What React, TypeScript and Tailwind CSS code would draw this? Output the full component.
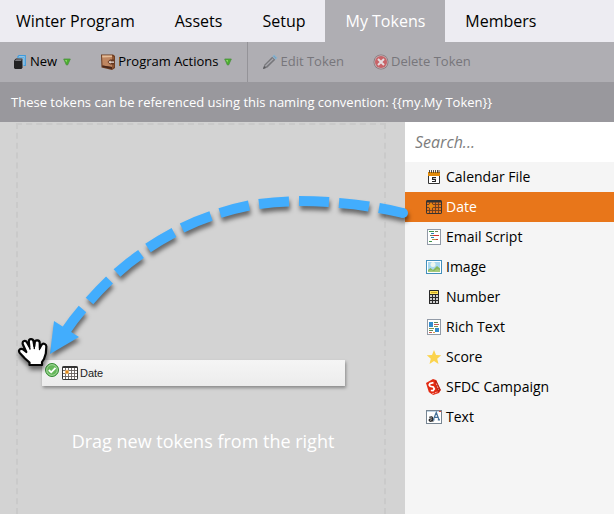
import { useState, type ReactNode } from "react";

function Icon({ children, className = "" }: { children: ReactNode; className?: string }) {
  return (
    <svg viewBox="0 0 16 16" className={`size-4 shrink-0 ${className}`} aria-hidden="true">
      {children}
    </svg>
  );
}

const NewIcon = () => (
  <Icon>
    <path d="M6 4V2.5L7 1.6H13.3V11.5H11.5" fill="#b4cfe3" stroke="#3f9bdc" strokeWidth="1.2" />
    <path d="M6 3.6H12V11" fill="none" stroke="#5aaee6" strokeWidth="1" />
    <path d="M2 6.5L4 4.4H10.5V13.5L9.5 15H3L2 14Z" fill="#222224" />
    <path d="M2.8 7L4.3 5.2H10L9 6.9Z" fill="#77777c" />
  </Icon>
);

const ProgramIcon = () => (
  <Icon>
    <path d="M1 .5H13L15 2V14L12 16L1.5 13.5Z" fill="#6e3d20" />
    <path d="M2 1.5H12V13L2.5 11.5Z" fill="#bf8660" />
    <path d="M2 1.5H12V3L2.5 3.5Z" fill="#e5bd98" />
    <path d="M12 1.5L14 3V13L12 15Z" fill="#8f5633" />
    <path d="M2.5 11.5L12 13V15L2.5 13Z" fill="#49271a" />
    <path d="M7.5 8L10 5.5H14V10.5H10Z" fill="#633620" />
    <path d="M8.5 8L10.5 6.5V7.4H14V8.8H10.5V9.8Z" fill="#f0e4da" />
  </Icon>
);

const EditIcon = () => (
  <Icon>
    <path d="M1 15L2.5 10.4L10.2 2.8L13.3 5.8L5.5 13.4Z" fill="#77777b" />
    <path d="M3.4 12.2L11.2 4.7" stroke="#aaaab0" strokeWidth="1.2" />
    <path d="M1 15L2 12L4 14Z" fill="#58585c" />
    <path d="M10.8 2.3L12.2 1L15 3.9L13.7 5.3Z" fill="#7ba4c1" stroke="#8bb4cf" />
  </Icon>
);

const DeleteIcon = () => (
  <Icon>
    <circle cx="8" cy="8" r="7.5" fill="#88777b" />
    <circle cx="8" cy="8" r="6.7" fill="#c5b4b7" />
    <circle cx="8" cy="8" r="6" fill="#c76368" />
    <path d="M5 5L11 11M11 5L5 11" stroke="#e4dcdf" strokeWidth="2" />
  </Icon>
);

const MenuArrow = () => (
  <svg viewBox="0 0 8 8" className="size-2 shrink-0" aria-hidden="true">
    <path d="M.7 1H7.3L4.6 7H3.4Z" fill="#4cae30" stroke="#4b8f40" strokeWidth=".8" />
    <path d="M2 2H4L3.6 4.5Z" fill="#8fdc6a" />
  </svg>
);

const CalendarFileIcon = () => (
  <Icon>
    <path d="M2.5 6V14.5H13.5V6" fill="#fff" stroke="#333" />
    <path d="M2 3H14V7H2Z" fill="#e08a0a" />
    <path d="M3.5 1V4M5.5 1V4M7.5 1V4M9.5 1V4M11.5 1V4M13 1V4" stroke="#443b2e" strokeWidth=".9" />
    <path d="M10 8.5H6.6V10.4H9.4V12.5H6" fill="none" stroke="#222" strokeWidth="1.1" />
  </Icon>
);

function DateIcon({ active = false }: { active?: boolean }) {
  return (
    <Icon>
      <rect x=".5" y="1.5" width="15" height="13" rx=".6" fill={active ? "#e8761a" : "#fff"} stroke="#333" />
      <path d="M1 2.5H15" stroke="#333" strokeWidth={active ? 2 : 1} />
      <path
        d="M3.5 3V14M6.5 3V14M9.5 3V14M12.5 3V14M1 5.5H15M1 8.5H15M1 11.5H15"
        stroke={active ? "#694022" : "#66615f"}
        strokeWidth=".9"
      />
      {active ? (
        <>
          <circle cx="5" cy="7" r="2.3" fill="#f08b08" />
          <path d="M5 4V10M2 7H8" stroke="#e78b15" strokeWidth=".9" />
        </>
      ) : (
        <>
          <circle cx="5" cy="7" r="2.2" fill="#f3bd72" />
          <circle cx="5" cy="7" r="1.3" fill="#e0861a" />
        </>
      )}
    </Icon>
  );
}

const EmailScriptIcon = () => (
  <Icon>
    <rect x="1.5" y=".5" width="13" height="15" fill="#fff" stroke="#929ba7" />
    <path d="M3 2.5H8M3 12.5H6" stroke="#3c9448" />
    <path d="M9 2.5H12M4 6.5H7" stroke="#707e54" />
    <path d="M5 4.5H8M5 8.5H8" stroke="#2b80b9" />
    <path d="M7 6.5H13M10 10.5H12" stroke="#cf3432" />
    <path d="M6 10.5H10" stroke="#bd9140" />
  </Icon>
);

const ImageIcon = () => (
  <Icon>
    <rect x=".5" y="1.5" width="15" height="13" fill="#fff" stroke="#4390bd" />
    <path d="M2 3H14V13H2Z" fill="#a9d8ee" />
    <circle cx="7" cy="5.5" r="2.5" fill="#edf6ee" />
    <path d="M2 11L4.5 9L7 11L11 7L14 9.5V13H2Z" fill="#88b85a" />
    <path d="M2 12L5 11L8 12L11 10L14 11V13H2Z" fill="#a5c97a" />
  </Icon>
);

const NumberIcon = () => (
  <Icon>
    <rect x="3" y="1" width="10" height="14" rx=".5" fill="#292929" />
    <path d="M4 2H12V5H4Z" fill="#ffe45c" />
    <path d="M5 3.5H11" stroke="#d2aa25" />
    <path d="M4 7H12M4 10H12M4 13H12" stroke="#cfcfcf" strokeWidth="2" strokeDasharray="2 1" />
  </Icon>
);

const RichTextIcon = () => (
  <Icon>
    <rect x="1.5" y=".5" width="13" height="15" fill="#fff" stroke="#929ba7" />
    <path d="M3 3H7V8H3ZM9 9H13V13H9Z" fill="#338cce" />
    <path d="M8 3.5H12M3 11.5H7" stroke="#5a8b56" />
    <path d="M8 5.5H13M3 13.5H6" stroke="#c65a52" />
    <path d="M8 7.5H12M3 9.5H8" stroke="#829550" />
    <path d="M7 13.5H9" stroke="#d6a149" />
  </Icon>
);

const ScoreIcon = () => (
  <Icon>
    <path d="M8 1L10 5.9L15.2 6.3L11.2 9.7L12.5 15L8 12.1L3.5 15L4.8 9.7L.8 6.3L6 5.9Z" fill="#fbd34c" />
  </Icon>
);

const SfdcIcon = () => (
  <Icon>
    <path d="M0 4L7 0L10 1L14.8 11L13 14L7 16L2.8 13Z" fill="#e22a12" />
    <path d="M10.2 1.3L14.8 11L12 13.3L9 2.5Z" fill="#ba2214" />
    <path d="M7.5 3.6L4 4.5L3.2 6L4.2 7.3L7.3 8L8.3 10L7 11.6L4.8 11.5" fill="none" stroke="#fff" strokeWidth="1.7" />
    <path d="M10.3 4.5L12.6 10.7M6 15L12 12.7" stroke="#ffd6ce" strokeWidth=".8" strokeDasharray="2 1" />
  </Icon>
);

const TextIcon = () => (
  <Icon>
    <rect x=".5" y="1.5" width="15" height="13" fill="#fff" stroke="#778592" />
    <path d="M1 2.5H15" stroke="#c1d5e4" />
    <path d="M13 2.5H15" stroke="#d84739" />
    <path d="M3.3 8.3Q6.3 7 6.5 9V12.2M6.5 9.8Q3 9.6 3.2 11.3Q3.8 13.1 6.5 11.4M6.5 12.2H7.4" fill="none" stroke="#252525" strokeWidth="1.3" />
    <path d="M7.3 10.8L10.3 3.5L13 10.8M8.5 8.4H12M6.8 10.8H8.5M11.8 10.8H14" fill="none" stroke="#447199" strokeWidth="1.2" />
  </Icon>
);

const tabs = ["Winter Program", "Assets", "Setup", "My Tokens", "Members"];

const tokenTypes = [
  { name: "Calendar File", icon: <CalendarFileIcon /> },
  { name: "Date", icon: <DateIcon active /> },
  { name: "Email Script", icon: <EmailScriptIcon /> },
  { name: "Image", icon: <ImageIcon /> },
  { name: "Number", icon: <NumberIcon /> },
  { name: "Rich Text", icon: <RichTextIcon /> },
  { name: "Score", icon: <ScoreIcon /> },
  { name: "SFDC Campaign", icon: <SfdcIcon /> },
  { name: "Text", icon: <TextIcon /> },
];

function DragArrow() {
  return (
    <svg
      viewBox="0 0 420 270"
      className="pointer-events-none absolute top-0 left-0 z-10 h-[270px] w-[420px] drop-shadow-[1px_4px_2px_rgba(0,0,0,0.5)]"
      aria-hidden="true"
    >
      <g fill="none" stroke="#42adfd" strokeWidth="10">
        <path d="M379 86Q391 88 403 91M339 81Q354 82 369 84.5M299 79Q314 79 329 80M259 82Q274 80 289 79.5M220 91Q234 86.5 249 83.5M182 106Q196 99 211 94M148 126Q160 118 174 110.5M117 151Q128 141 141 132M89.5 179Q99 168 109.5 158M65 210Q73 198 82.5 187" />
      </g>
      <circle cx="403" cy="91" r="5" fill="#42adfd" />
      <path d="M50 232L54 199L79 215Z" fill="#42adfd" />
    </svg>
  );
}

function GrabHand() {
  return (
    <svg
      viewBox="0 0 32 32"
      className="pointer-events-none absolute top-[214px] left-[17px] z-20 size-8 drop-shadow-[1px_4px_2px_rgba(0,0,0,0.5)]"
      aria-hidden="true"
    >
      <path
        d="M12.5 29V26.5L8 22.5L2.8 17C0.8 14.5 3.2 11.8 5.8 13.2L9.3 16L5.8 8.2C4.9 4.6 8.6 3.8 10 6.4L12.3 10.5L11.8 5.5C11.8 2.4 16 2.4 16.5 5.4L17.3 10L17.8 6C18.4 3.6 22.6 4 22.7 6.8L22.8 12L24.6 8.8C26.2 6.6 29.8 8 29.3 11.2L28.8 17.5L27 23L25 26V29Z"
        fill="#fff"
        stroke="#050505"
        strokeWidth="2.2"
        strokeLinejoin="round"
      />
      <path d="M12.2 10L13 13M17.3 9.5V12.5M22.8 11L22.5 13.5" stroke="#050505" strokeWidth="1.4" strokeLinecap="round" />
    </svg>
  );
}

export default function App() {
  const [activeTab, setActiveTab] = useState("My Tokens");
  const [selected, setSelected] = useState("Date");

  return (
    <div className="flex min-h-screen flex-col bg-[#d3d3d3] font-['Open_Sans','Noto_Sans',sans-serif] text-black">
      <nav className="flex h-[42px] shrink-0 bg-[#edecf2] text-base whitespace-nowrap" aria-label="Program">
        {tabs.map((tab) => (
          <button
            key={tab}
            type="button"
            onClick={() => setActiveTab(tab)}
            aria-current={activeTab === tab ? "page" : undefined}
            className={`px-5 first:pl-4 ${activeTab === tab ? "bg-[#afaeb3] text-white" : ""}`}
          >
            {tab}
          </button>
        ))}
      </nav>

      <div role="toolbar" aria-label="Token actions" className="flex h-10 shrink-0 bg-[#afaeb3] text-[13px] whitespace-nowrap">
        <div className="flex gap-[29px] border-r border-[#949398] pr-[15px] pl-3">
          <button type="button" aria-haspopup="menu" className="flex items-center gap-1.5">
            <span className="flex items-center gap-0.5"><NewIcon />New</span>
            <MenuArrow />
          </button>
          <button type="button" aria-haspopup="menu" className="flex items-center gap-1.5">
            <span className="flex items-center gap-0.5"><ProgramIcon />Program Actions</span>
            <MenuArrow />
          </button>
        </div>
        <div className="flex gap-[29px] pl-3.5 text-[#77767b]">
          <button type="button" disabled className="flex items-center gap-0.5"><EditIcon />Edit Token</button>
          <button type="button" disabled className="flex items-center gap-0.5"><DeleteIcon />Delete Token</button>
        </div>
      </div>

      <p className="flex h-10 shrink-0 items-center bg-[#99989d] px-[11px] pt-px text-[13px] text-white">
        {"These tokens can be referenced using this naming convention: {{my.My Token}}"}
      </p>

      <div className="flex flex-1">
        <main className="relative flex min-w-0 flex-1">
          <div className="mt-px mr-[19px] ml-4 flex flex-1 justify-center border-2 border-b-0 border-dashed border-[#cacaca] pt-[302px] pl-1">
            <p className="text-lg text-white">Drag new tokens from the right</p>
          </div>
          <div className="absolute top-[238px] right-[60px] left-[42px] flex h-[26px] items-center gap-[3px] bg-linear-to-b from-[#f5f5f5] to-[#ececec] pl-[3px] shadow-[1px_2px_3px_rgba(0,0,0,0.35)]">
            <svg viewBox="0 0 14 14" className="mb-1.5 size-3.5" aria-hidden="true">
              <circle cx="7" cy="7" r="6.5" fill="#65b75a" stroke="#368b36" />
              <circle cx="7" cy="7" r="5.3" fill="none" stroke="#a4d89b" />
              <path d="M3.8 7L6.2 9.3L10.5 4.8" fill="none" stroke="#fff" strokeWidth="1.8" />
            </svg>
            <span className="flex items-center gap-0.5 font-['Liberation_Sans',Arial,sans-serif] text-[11px] text-[#222]">
              <DateIcon />
              Date
            </span>
          </div>
          <DragArrow />
          <GrabHand />
        </main>

        <aside className="w-[209px] shrink-0 bg-[#f5f5f5]">
          <input
            type="search"
            aria-label="Search tokens"
            placeholder="Search..."
            className="block h-10 w-full bg-white px-2.5 text-base italic outline-none placeholder:text-[#7d7d7d]"
          />
          <ul className="text-sm">
            {tokenTypes.map(({ name, icon }) => (
              <li key={name}>
                <button
                  type="button"
                  onClick={() => setSelected(name)}
                  aria-pressed={selected === name}
                  className={`flex h-[30px] w-full items-center gap-1 pl-[21px] ${selected === name ? "bg-[#e8761a] text-white" : ""}`}
                >
                  {icon}
                  {name}
                </button>
              </li>
            ))}
          </ul>
        </aside>
      </div>
    </div>
  );
}
